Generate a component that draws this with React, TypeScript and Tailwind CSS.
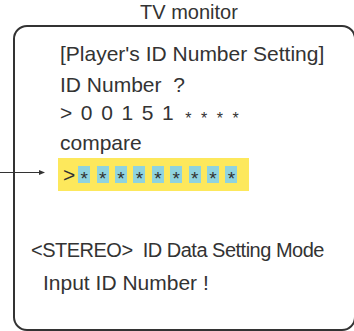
import React from "react";

const font = { fontFamily: '"Liberation Sans", Arial, sans-serif' };

const Pointer = () => (
  <svg className="absolute left-0 top-[168px]" width="48" height="9" viewBox="0 0 48 9">
    <line x1="0" y1="4.5" x2="41" y2="4.5" stroke="#333" strokeWidth="1" />
    <path d="M39 2 L45 4.5 L39 7 Z" fill="#333" />
  </svg>
);

const App: React.FC = () => {
  const slots = Array.from({ length: 9 }, (_, i) => i);

  return (
    <div className="relative w-[354px] h-[331px] overflow-hidden bg-white text-[#333]" style={font}>
      <div className="h-[25px] pl-[24px] text-center text-[20px] leading-[25px]">TV monitor</div>

      <div className="ml-[13px] w-[343px] h-[306px] rounded-[14px] border-2 border-[#333] pt-[12px]">
        <div className="pl-[45px] text-[21px] leading-[30px]">
          <div className="h-[31px]">[Player's ID Number Setting]</div>
          <div className="h-[28px] whitespace-pre">ID Number  ?</div>
          <div className="h-[30px] whitespace-pre">
            <span className="tracking-[8.6px]">&gt;00151</span>
            <span className="ml-[3px] text-[16px] tracking-[9.5px] align-[-4px]">****</span>
          </div>
          <div className="h-[30px]">compare</div>
        </div>

        <div className="ml-[43px] flex h-[33px] w-[191px] items-center bg-[#fde85c] pl-[5px]">
          <span className="text-[21px] leading-none mr-[3px]">&gt;</span>
          <div className="flex gap-[6.4px]">
            {slots.map((i) => (
              <div key={i} className="flex h-[17px] w-[12px] items-center justify-center bg-[#8fd3df]">
                <span className="text-[19px] leading-none translate-y-[4px]">*</span>
              </div>
            ))}
          </div>
        </div>

        <div className="mt-[44px] text-[21px] leading-[30px]">
          <div className="h-[33px] pl-[16px] whitespace-pre text-[20px] tracking-[-0.5px]">&lt;STEREO&gt;  ID Data Setting Mode</div>
          <div className="h-[30px] pl-[28px]">Input ID Number !</div>
        </div>
      </div>

      <Pointer />
    </div>
  );
};

export default App;
